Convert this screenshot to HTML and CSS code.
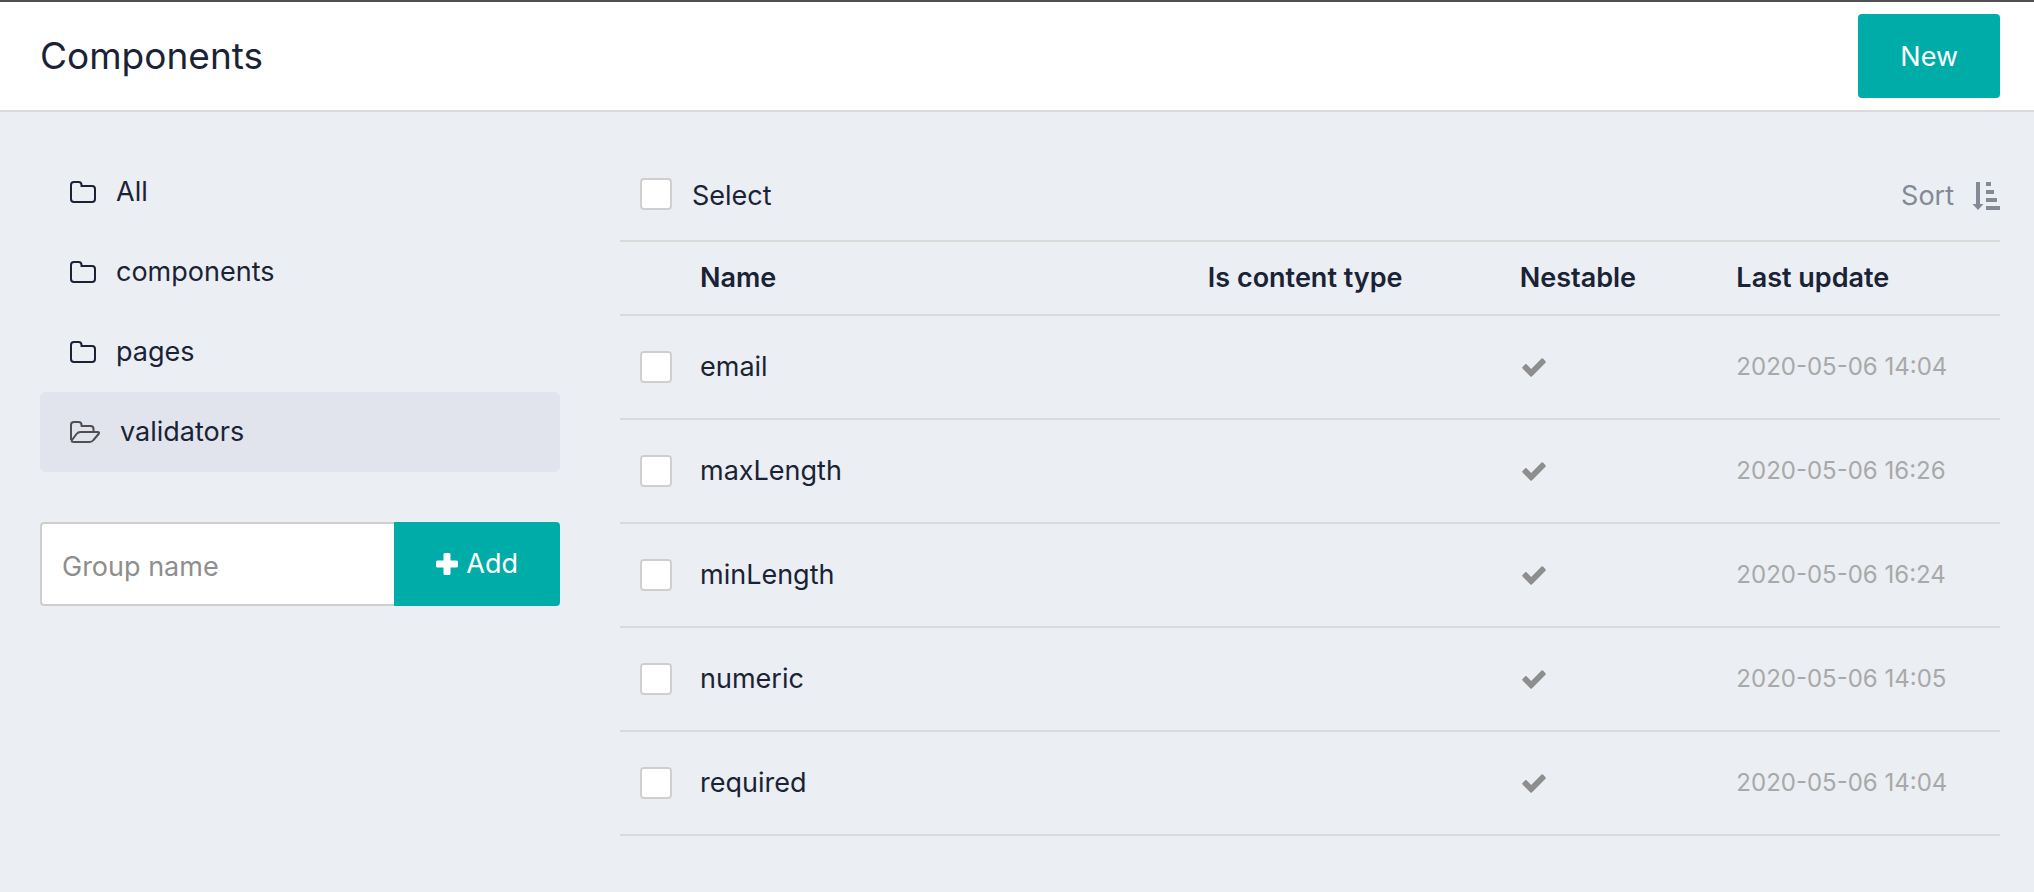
FILE: index.html
```
<!DOCTYPE html>
<html lang="en">
<head>
    <meta charset="UTF-8">
    <meta name="viewport" content="width=device-width, initial-scale=1.0">
    <title>Components</title>
    <link rel="stylesheet" href="styles.css">
</head>
<body>
    <!-- Shared icons -->
    <svg class="icon-defs" aria-hidden="true">
        <symbol id="icon-folder" viewBox="0 0 26 22">
            <path d="M1 4a3 3 0 0 1 3-3h4.500a3 3 0 0 1 3 3v1H22a3 3 0 0 1 3 3v10a3 3 0 0 1-3 3H4a3 3 0 0 1-3-3z" fill="none" stroke="currentColor" stroke-width="2" />
        </symbol>
        <symbol id="icon-folder-open" viewBox="0 0 30 22">
            <path d="M1 19V4a3 3 0 0 1 3-3H8.500a3 3 0 0 1 3 3v1H20.500a3 3 0 0 1 3 3v3M4 21H19.500Q22 21 23.500 19L28.500 13Q30 11 27.500 11H10.500Q8 11 6.500 13L2 19Q1 21 4 21z" fill="none" stroke="currentColor" stroke-width="2" stroke-linejoin="round" />
        </symbol>
        <symbol id="icon-check" viewBox="0 0 24 19">
            <path d="M23.500 3.200 20.900.500Q20.200-.1 19.500.500L9.200 10.900 4.600 6.300Q3.900 5.700 3.200 6.300L.500 9Q-.1 9.700.500 10.400L8.500 18.400Q9.200 19 9.900 18.400L23.500 4.700Q24.100 4 23.500 3.200z" fill="currentColor" />
        </symbol>
        <symbol id="icon-plus" viewBox="0 0 22 22">
            <path d="M9 0h4a1.500 1.500 0 0 1 1.500 1.500v6h6A1.500 1.500 0 0 1 22 9v4a1.500 1.500 0 0 1-1.500 1.500h-6v6A1.500 1.500 0 0 1 13 22H9a1.500 1.500 0 0 1-1.500-1.500v-6h-6A1.500 1.500 0 0 1 0 13V9a1.500 1.500 0 0 1 1.500-1.500h6v-6A1.500 1.500 0 0 1 9 0z" fill="currentColor" />
        </symbol>
        <symbol id="icon-sort" viewBox="0 0 28 28">
            <path d="M4 0h4v22h3.500L6 28 .500 22H4zM14 0h5v4h-5zM14 8h8v4h-8zM14 16h11v4H14zM14 24h14v4H14z" fill="currentColor" />
        </symbol>
    </svg>

    <header class="header">
        <h1 class="header-title">Components</h1>
        <button class="btn" type="button">New</button>
    </header>

    <div class="layout">
        <aside class="sidebar">
            <nav class="groups">
                <a class="group" href="#"><svg class="icon-folder"><use href="#icon-folder" /></svg>All</a>
                <a class="group" href="#"><svg class="icon-folder"><use href="#icon-folder" /></svg>components</a>
                <a class="group" href="#"><svg class="icon-folder"><use href="#icon-folder" /></svg>pages</a>
                <a class="group active" href="#"><svg class="icon-folder-open"><use href="#icon-folder-open" /></svg>validators</a>
            </nav>

            <form class="group-form">
                <input class="group-input" type="text" placeholder="Group name" aria-label="Group name">
                <button class="btn btn-add" type="button"><svg class="icon-plus"><use href="#icon-plus" /></svg>Add</button>
            </form>
        </aside>

        <main class="content">
            <div class="toolbar">
                <label class="select-all"><input class="checkbox" type="checkbox"><span>Select</span></label>
                <button class="sort" type="button">Sort<svg class="icon-sort"><use href="#icon-sort" /></svg></button>
            </div>

            <table class="table">
                <thead>
                    <tr>
                        <th class="col-check"></th>
                        <th class="col-name">Name</th>
                        <th class="col-type">Is content type</th>
                        <th class="col-nestable">Nestable</th>
                        <th>Last update</th>
                    </tr>
                </thead>
                <tbody>
                    <tr>
                        <td class="col-check"><input class="checkbox" type="checkbox" aria-label="email"></td>
                        <td>email</td>
                        <td></td>
                        <td><svg class="icon-check"><use href="#icon-check" /></svg></td>
                        <td class="date">2020-05-06 14:04</td>
                    </tr>
                    <tr>
                        <td class="col-check"><input class="checkbox" type="checkbox" aria-label="maxLength"></td>
                        <td>maxLength</td>
                        <td></td>
                        <td><svg class="icon-check"><use href="#icon-check" /></svg></td>
                        <td class="date">2020-05-06 16:26</td>
                    </tr>
                    <tr>
                        <td class="col-check"><input class="checkbox" type="checkbox" aria-label="minLength"></td>
                        <td>minLength</td>
                        <td></td>
                        <td><svg class="icon-check"><use href="#icon-check" /></svg></td>
                        <td class="date">2020-05-06 16:24</td>
                    </tr>
                    <tr>
                        <td class="col-check"><input class="checkbox" type="checkbox" aria-label="numeric"></td>
                        <td>numeric</td>
                        <td></td>
                        <td><svg class="icon-check"><use href="#icon-check" /></svg></td>
                        <td class="date">2020-05-06 14:05</td>
                    </tr>
                    <tr>
                        <td class="col-check"><input class="checkbox" type="checkbox" aria-label="required"></td>
                        <td>required</td>
                        <td></td>
                        <td><svg class="icon-check"><use href="#icon-check" /></svg></td>
                        <td class="date">2020-05-06 14:04</td>
                    </tr>
                </tbody>
            </table>
        </main>
    </div>
</body>
</html>
```
FILE: styles.css
```
* {
    box-sizing: border-box;
}

body {
    margin: 0;
    background-color: #ebeef3;
    border-top: 2px solid #504e50;
    color: #1a2336;
    font-family: Inter, "Liberation Sans", sans-serif;
    font-size: 27px;
    line-height: 40px;
    min-height: 100vh;
}

button,
input {
    font: inherit;
}

.icon-defs {
    display: none;
}

/* Header */
.header {
    display: flex;
    justify-content: space-between;
    align-items: center;
    padding: 12px 34px 12px 40px;
    background-color: white;
    border-bottom: 2px solid #dadada;
}

.header-title {
    margin: 0;
    font-size: 37px;
    font-weight: 400;
}

.btn {
    height: 84px;
    padding: 2px 42px 0;
    border: 0;
    border-radius: 4px;
    background-color: #00aca8;
    color: white;
    cursor: pointer;
}

.layout {
    display: grid;
    grid-template-columns: 520px 1fr;
    gap: 60px;
    padding: 40px 34px 40px 40px;
}

/* Group list */
.group {
    display: flex;
    align-items: center;
    gap: 20px;
    height: 80px;
    padding: 0 30px;
    border-radius: 6px;
    color: inherit;
    text-decoration: none;
}

.group.active {
    background-color: #e1e4ec;
}

.icon-folder {
    width: 26px;
    height: 22px;
}

.icon-folder-open {
    width: 30px;
    height: 22px;
    color: #504e50;
}

/* Add group */
.group-form {
    display: flex;
    margin-top: 50px;
}

.group-input {
    flex: 1;
    min-width: 0;
    padding: 6px 20px 0;
    border: 2px solid #cfcfcf;
    border-right: 0;
    border-radius: 4px 0 0 4px;
    background-color: white;
}

.group-input::placeholder {
    color: #8e8e8e;
}

.btn-add {
    display: flex;
    align-items: center;
    gap: 8px;
    padding-top: 0;
    border-radius: 0 4px 4px 0;
}

.icon-plus {
    width: 22px;
    height: 22px;
}

/* Toolbar */
.toolbar {
    display: flex;
    justify-content: space-between;
    align-items: center;
    height: 90px;
    padding-left: 20px;
    border-bottom: 2px solid #dadada;
}

.select-all {
    display: flex;
    align-items: flex-start;
    gap: 20px;
    line-height: 36px;
}

.checkbox {
    appearance: none;
    display: block;
    width: 32px;
    height: 32px;
    margin: 0;
    border: 2px solid #cfcfcf;
    border-radius: 4px;
    background-color: white;
}

.checkbox:checked {
    background-color: #00aca8;
}

.sort {
    display: flex;
    align-items: center;
    gap: 18px;
    padding: 0;
    border: 0;
    background: none;
    color: #838995;
    cursor: pointer;
}

.icon-sort {
    width: 28px;
    height: 28px;
}

/* Components table */
.table {
    width: 100%;
    table-layout: fixed;
    border-collapse: separate;
    border-spacing: 0;
}

.table th,
.table td {
    padding: 0;
    border-bottom: 2px solid #dadada;
    text-align: left;
}

.table th {
    height: 74px;
    font-weight: 600;
}

.table td {
    height: 104px;
}

.table .col-check {
    width: 80px;
    padding-left: 20px;
}

.col-name {
    width: 36.8%;
}

.col-type {
    width: 22.6%;
}

.col-nestable {
    width: 15.7%;
}

.table .date {
    color: #a9a9a9;
    font-size: 24px;
}

.icon-check {
    display: block;
    width: 24px;
    height: 19px;
    margin-left: 2px;
    color: #8e8e8e;
}
```
